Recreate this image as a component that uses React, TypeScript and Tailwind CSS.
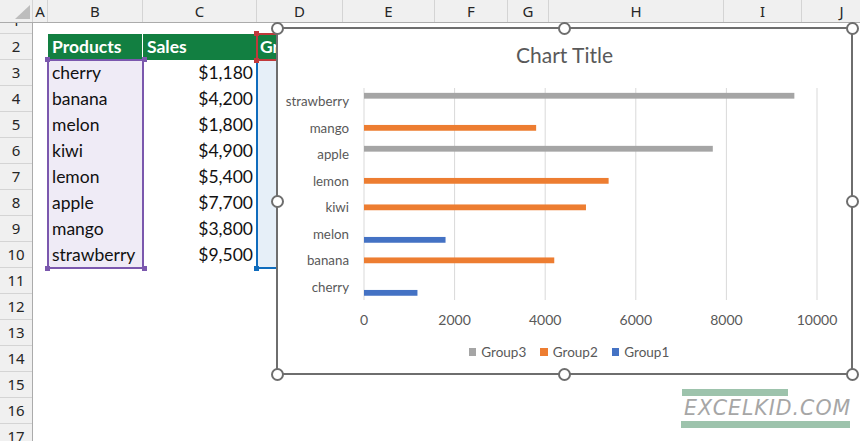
import type { ReactNode } from 'react'

const COLUMNS = [
  { key: 'A', w: 15 },
  { key: 'B', w: 95 },
  { key: 'C', w: 114 },
  { key: 'D', w: 86 },
  { key: 'E', w: 92 },
  { key: 'F', w: 73 },
  { key: 'G', w: 41 },
  { key: 'H', w: 175 },
  { key: 'I', w: 78 },
  { key: 'J', w: 80 },
]

const PRODUCTS = [
  { name: 'cherry', sales: '$1,180' },
  { name: 'banana', sales: '$4,200' },
  { name: 'melon', sales: '$1,800' },
  { name: 'kiwi', sales: '$4,900' },
  { name: 'lemon', sales: '$5,400' },
  { name: 'apple', sales: '$7,700' },
  { name: 'mango', sales: '$3,800' },
  { name: 'strawberry', sales: '$9,500' },
]

// chart rows, top to bottom (bar chart draws categories reversed)
const BARS = [
  { label: 'strawberry', group: 3, value: 9500 },
  { label: 'mango', group: 2, value: 3800 },
  { label: 'apple', group: 3, value: 7700 },
  { label: 'lemon', group: 2, value: 5400 },
  { label: 'kiwi', group: 2, value: 4900 },
  { label: 'melon', group: 1, value: 1800 },
  { label: 'banana', group: 2, value: 4200 },
  { label: 'cherry', group: 1, value: 1180 },
]

const GROUP_COLOR: Record<number, string> = { 1: '#4472c4', 2: '#ed7d31', 3: '#a5a5a5' }
const GROUP_OFFSET: Record<number, number> = { 1: 3.2, 2: -2.8, 3: -8.4 }

const ROWS = Array.from({ length: 16 }, (_, i) => i + 2)

const cellFont = { fontFamily: 'Lato, "Liberation Sans", sans-serif' }

function ColumnHeader() {
  return (
    <div className="flex h-[23px] border-b border-[#ababab] bg-[#f0f0f0] font-['Noto_Sans',sans-serif] text-[15px] text-[#262626]">
      <div className="flex w-[33px] shrink-0 items-end justify-end border-r border-[#d4d4d4] pb-[3px] pr-[2px]">
        <svg width="15" height="14" viewBox="0 0 15 14">
          <polygon points="15,0 15,14 0,14" fill="#bdbdbd" />
        </svg>
      </div>
      {COLUMNS.map((col) => (
        <div
          key={col.key}
          className="flex shrink-0 items-center justify-center border-r border-[#d4d4d4] leading-none"
          style={{ width: col.w }}
        >
          {col.key}
        </div>
      ))}
    </div>
  )
}

function RowHeader() {
  return (
    <div className="w-[33px] shrink-0 border-r border-[#ababab] bg-[#f0f0f0] font-['Noto_Sans',sans-serif] text-[15px] text-[#262626]">
      <div className="h-[11px] overflow-hidden border-b border-[#d4d4d4] text-center">
        <div className="-mt-[16px] h-[26px] leading-[26px]">1</div>
      </div>
      {ROWS.map((n) => (
        <div key={n} className="flex h-[26px] items-center justify-center border-b border-[#d4d4d4]">
          {n}
        </div>
      ))}
    </div>
  )
}

function Handle({ className }: { className: string }) {
  return <div className={`absolute h-[13px] w-[13px] rounded-full border-2 border-[#6e6e6e] bg-white ${className}`} />
}

function Square({ className }: { className: string }) {
  return <div className={`absolute h-[5px] w-[5px] ${className}`} />
}

function Cell({ children, className = '' }: { children?: ReactNode; className?: string }) {
  return <div className={`flex h-[26px] items-center px-[4px] text-[17.5px] text-[#111] ${className}`}>{children}</div>
}

function BarChart() {
  const x0 = 86
  const scale = 0.0453
  const top = 7
  const band = 26.5
  const ticks = [0, 2000, 4000, 6000, 8000, 10000]

  return (
    <svg width="573" height="262" className="block" style={cellFont}>
      {ticks.map((t) => (
        <line key={t} x1={x0 + t * scale} x2={x0 + t * scale} y1={top} y2={top + band * 8} stroke="#d9d9d9" strokeWidth="1" />
      ))}
      {BARS.map((b, i) => {
        const cy = top + band * (i + 0.5)
        return (
          <g key={b.label}>
            <text x="71" y={cy + 5} textAnchor="end" fontSize="13.3" fill="#595959">
              {b.label}
            </text>
            <rect x={x0} y={cy + GROUP_OFFSET[b.group]} width={b.value * scale} height="5.8" fill={GROUP_COLOR[b.group]} />
          </g>
        )
      })}
      {ticks.map((t) => (
        <text key={t} x={x0 + t * scale} y="244" textAnchor="middle" fontSize="14" fill="#595959">
          {t}
        </text>
      ))}
    </svg>
  )
}

function Chart() {
  return (
    <div className="absolute left-[276px] top-[27px] z-20 h-[348px] w-[577px] border-2 border-[#6e6e6e] bg-white" style={cellFont}>
      <div className="flex h-[52px] items-center justify-center text-[21px] text-[#595959]">Chart Title</div>
      <BarChart />
      <div className="flex h-[18px] items-center justify-center gap-[14px] pl-[9px] text-[13.5px] text-[#595959]">
        {[3, 2, 1].map((g) => (
          <div key={g} className="flex items-center gap-[5px]">
            <span className="h-[7.5px] w-[7.5px]" style={{ background: GROUP_COLOR[g] }} />
            <span>Group{g}</span>
          </div>
        ))}
      </div>

      <Handle className="-left-[7.5px] -top-[7.5px]" />
      <Handle className="left-[280px] -top-[7.5px]" />
      <Handle className="-right-[7.5px] -top-[7.5px]" />
      <Handle className="-left-[7.5px] top-[165.5px]" />
      <Handle className="-right-[7.5px] top-[165.5px]" />
      <Handle className="-left-[7.5px] -bottom-[7.5px]" />
      <Handle className="left-[280px] -bottom-[7.5px]" />
      <Handle className="-right-[7.5px] -bottom-[7.5px]" />
    </div>
  )
}

function Watermark() {
  return (
    <div className="absolute left-[681px] top-[389px] z-20 flex w-[169px] flex-col">
      <div className="ml-[1px] h-[7px] w-[106px] bg-[#9dc3ac]" />
      <div className="flex h-[25px] items-center pl-[3px] font-['DejaVu_Sans',sans-serif] text-[20.5px] font-extralight italic leading-none tracking-[1px] text-[#a6a6a6]">
        EXCELKID.COM
      </div>
      <div className="h-[7px] w-[169px] bg-[#9dc3ac]" />
    </div>
  )
}

export default function App() {
  return (
    <div className="relative h-[441px] w-[860px] overflow-hidden bg-white">
      <ColumnHeader />
      <div className="flex">
        <RowHeader />
        <div className="flex" style={cellFont}>
          <div className="w-[15px] shrink-0" />

          {/* column B */}
          <div className="w-[95px] shrink-0">
            <div className="h-[11px]" />
            <Cell className="border-r border-white bg-[#127f41] font-bold text-white">Products</Cell>
            <div className="relative bg-[#efebf6] outline-2 -outline-offset-1 outline-[#7b58ae]">
              {PRODUCTS.map((p) => (
                <Cell key={p.name}>{p.name}</Cell>
              ))}
              <Square className="-left-[3.5px] -top-[3px] bg-[#7b58ae]" />
              <Square className="-right-[3.5px] -top-[3px] bg-[#7b58ae]" />
              <Square className="-left-[3.5px] -bottom-[3px] bg-[#7b58ae]" />
              <Square className="-right-[3.5px] -bottom-[3px] bg-[#7b58ae]" />
            </div>
          </div>

          {/* column C */}
          <div className="w-[114px] shrink-0">
            <div className="h-[11px]" />
            <Cell className="bg-[#127f41] pr-0 font-bold text-white">
              <span className="flex-1">Sales</span>
            </Cell>
            {PRODUCTS.map((p) => (
              <Cell key={p.name} className="justify-end">
                {p.sales}
              </Cell>
            ))}
          </div>

          {/* column D */}
          <div className="w-[86px] shrink-0">
            <div className="h-[11px]" />
            <div className="relative z-10 outline-2 -outline-offset-1 outline-[#c0393b]">
              <Cell className="bg-[#127f41] pl-[3px] font-bold text-white">Group</Cell>
              <Square className="-left-[3px] -top-[3px] bg-[#c0393b]" />
              <Square className="-left-[3px] -bottom-[3px] bg-[#c0393b]" />
            </div>
            <div className="relative h-[208px] bg-[#e6eff8] outline-2 -outline-offset-1 outline-[#0f6cbd]">
              <Square className="-left-[3px] -bottom-[3px] bg-[#0f6cbd]" />
            </div>
          </div>
        </div>
      </div>

      <Chart />
      <Watermark />
    </div>
  )
}
